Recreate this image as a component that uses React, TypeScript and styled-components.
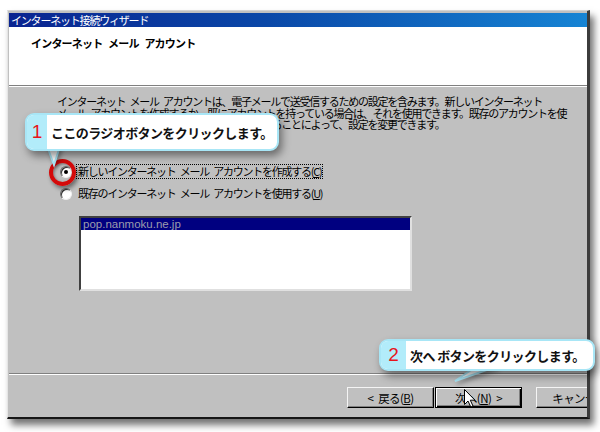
import React from 'react';
import styled, { createGlobalStyle } from 'styled-components';

const GlobalStyle = createGlobalStyle`
  html, body {
    margin: 0;
    padding: 0;
    background: #fff;
  }
  body {
    width: 600px;
    height: 432px;
    overflow: hidden;
    font-family: "Noto Sans CJK JP", "Liberation Sans", sans-serif;
  }
`;

const Stage = styled.div`
  position: relative;
  width: 600px;
  height: 432px;
  padding: 10px 0 0 7px;
  box-sizing: border-box;
`;

const Window = styled.div`
  width: 583px;
  height: 409px;
  box-sizing: border-box;
  display: flex;
  flex-direction: column;
  background: #c0c0c0;
  border-top: 1px solid #d4d4d4;
  border-left: 1px solid #e4e4e4;
  border-right: 3px solid #3c3c3c;
  border-bottom: 2px solid #161616;
  padding: 2px 0 0 1px;
  box-shadow: 4px 6px 7px rgba(0, 0, 0, 0.55);
  overflow: hidden;
`;

const TitleBar = styled.div`
  height: 14px;
  flex: none;
  display: flex;
  align-items: center;
  padding-left: 2px;
  background: linear-gradient(90deg, #0a2490 0%, #0a48a8 45%, #1684d4 100%);
  color: #fff;
  font-size: 11px;
  letter-spacing: -1.2px;
  line-height: 14px;
`;

const Header = styled.div`
  height: 59px;
  flex: none;
  box-sizing: border-box;
  background: #fff;
  border-bottom: 1px solid #808080;
  padding: 8px 0 0 22px;
`;

const HeaderTitle = styled.div`
  font-size: 11px;
  font-weight: bold;
  letter-spacing: -0.8px;
  word-spacing: 4px;
  color: #000;
`;

const Body = styled.div`
  flex: 1;
  border-top: 1px solid #fff;
  padding: 9px 0 0 48px;
  font-size: 11px;
  letter-spacing: -1.25px;
  word-spacing: 3px;
  color: #000;
`;

const Paragraph = styled.p`
  margin: 0;
  line-height: 11.5px;
  white-space: nowrap;
`;

const RadioGroup = styled.div`
  margin-top: 34px;
  margin-left: 3px;
  display: flex;
  flex-direction: column;
  gap: 8px;
`;

const RadioRow = styled.label`
  display: flex;
  align-items: center;
  gap: 5px;
  height: 14px;
`;

const RadioDot = styled.span<{ $checked?: boolean }>`
  position: relative;
  width: 12px;
  height: 12px;
  box-sizing: border-box;
  border-radius: 50%;
  background: #fff;
  border: 1px solid;
  border-color: #6a6a6a #f0f0f0 #f0f0f0 #6a6a6a;
  box-shadow: inset 1px 1px 0 #303030;
  &::after {
    content: '';
    display: ${p => (p.$checked ? 'block' : 'none')};
    position: absolute;
    left: 3px;
    top: 3px;
    width: 4px;
    height: 4px;
    border-radius: 50%;
    background: #000;
  }
`;

const RadioLabel = styled.span<{ $focused?: boolean }>`
  padding: 0 1px;
  line-height: 13px;
  white-space: nowrap;
  outline: ${p => (p.$focused ? '1px dotted #000' : 'none')};
`;

const Key = styled.span`
  text-decoration: underline;
`;

const ListBox = styled.div`
  margin: 15px 0 0 22px;
  width: 333px;
  height: 75px;
  box-sizing: border-box;
  background: #fff;
  border: 2px solid;
  border-color: #404040 #e0e0e0 #e0e0e0 #404040;
`;

const ListItem = styled.div<{ $selected?: boolean }>`
  height: 12px;
  line-height: 12px;
  padding-left: 2px;
  font-family: "Liberation Sans", Arial, sans-serif;
  font-size: 11.5px;
  letter-spacing: 0;
  word-spacing: 0;
  color: ${p => (p.$selected ? '#9c9cac' : '#000')};
  background: ${p => (p.$selected ? '#000080' : 'transparent')};
`;

const Footer = styled.div`
  height: 44px;
  flex: none;
  box-sizing: border-box;
  border-top: 1px solid #808080;
  box-shadow: inset 0 1px 0 #fff;
  padding: 13px 0 0 338px;
  display: flex;
  gap: 1px;
`;

const Button = styled.div<{ $default?: boolean }>`
  flex: none;
  width: 87px;
  height: 21px;
  box-sizing: border-box;
  display: flex;
  align-items: center;
  justify-content: center;
  white-space: pre;
  font-size: 11.5px;
  letter-spacing: -0.6px;
  word-spacing: 3px;
  color: #000;
  background: #c0c0c0;
  border: 1px solid;
  border-color: ${p => (p.$default ? '#000' : '#f4f4f4 #000 #000 #f4f4f4')};
  box-shadow: ${p =>
    p.$default
      ? 'inset 1px 1px 0 #fff, inset -1px -1px 0 #000, inset -2px -2px 0 #808080'
      : 'inset -1px -1px 0 #808080'};
`;

const CancelButton = styled(Button)`
  margin-left: 13px;
`;

const Callout = styled.div<{ $x: number; $y: number; $w: number; $h: number }>`
  position: absolute;
  left: ${p => p.$x}px;
  top: ${p => p.$y}px;
  width: ${p => p.$w}px;
  height: ${p => p.$h}px;
  box-sizing: border-box;
  display: flex;
  border: 2px solid #a8e6f6;
  border-radius: 9px;
  background: #fff;
  box-shadow: 3px 5px 8px rgba(0, 0, 0, 0.45);
`;

const CalloutNum = styled.div<{ $w: number }>`
  flex: none;
  width: ${p => p.$w}px;
  display: flex;
  align-items: center;
  justify-content: center;
  background: #b2ecfa;
  border-radius: 7px 0 0 7px;
  color: #e8151c;
  font-family: "Liberation Sans", Arial, sans-serif;
  font-size: 19px;
`;

const CalloutText = styled.div`
  flex: 1;
  display: flex;
  align-items: center;
  padding-left: 4px;
  font-size: 13px;
  font-weight: bold;
  letter-spacing: -0.6px;
  color: #111;
  white-space: nowrap;
`;

const Tail = styled.svg<{ $x: number; $y: number }>`
  position: absolute;
  left: ${p => p.$x}px;
  top: ${p => p.$y}px;
  overflow: visible;
  filter: drop-shadow(2px 3px 2px rgba(0, 0, 0, 0.3));
`;

const Ring = styled.div`
  position: absolute;
  left: 49px;
  top: 159px;
  width: 27px;
  height: 27px;
  box-sizing: border-box;
  border-radius: 50%;
  border: 4px solid #d40a0a;
  box-shadow: 2px 3px 4px rgba(0, 0, 0, 0.45), inset 1px 1px 3px rgba(0, 0, 0, 0.4);
`;

const Cursor = styled.svg`
  position: absolute;
  left: 464px;
  top: 389px;
`;

export default function App() {
  return (
    <>
      <GlobalStyle />
      <Stage>
        <Window>
          <TitleBar>インターネット接続ウィザード</TitleBar>
          <Header>
            <HeaderTitle>インターネット メール アカウント</HeaderTitle>
          </Header>
          <Body>
            <Paragraph>
              インターネット メール アカウントは、電子メールで送受信するための設定を含みます。新しいインターネット
              <br />
              メール アカウントを作成するか、既にアカウントを持っている場合は、それを使用できます。既存のアカウントを使
              <br />
              用する場合は、一覧からそのアカウントを選択することによって、設定を変更できます。
            </Paragraph>
            <RadioGroup>
              <RadioRow>
                <RadioDot $checked />
                <RadioLabel $focused>
                  新しいインターネット メール アカウントを作成する(<Key>C</Key>)
                </RadioLabel>
              </RadioRow>
              <RadioRow>
                <RadioDot />
                <RadioLabel>
                  既存のインターネット メール アカウントを使用する(<Key>U</Key>)
                </RadioLabel>
              </RadioRow>
            </RadioGroup>
            <ListBox>
              <ListItem $selected>pop.nanmoku.ne.jp</ListItem>
            </ListBox>
          </Body>
          <Footer>
            <Button>
              {'< 戻る('}<Key>B</Key>{')'}
            </Button>
            <Button $default>
              {'次へ('}<Key>N</Key>{') >'}
            </Button>
            <CancelButton>キャンセル</CancelButton>
          </Footer>
        </Window>

        <Ring />

        <Tail $x={44} $y={146} width="20" height="22">
          <path d="M3 0 L10 19 L16 0 Z" fill="#fff" stroke="#a8e6f6" strokeWidth="2" />
        </Tail>
        <Callout $x={25} $y={113} $w={254} $h={38}>
          <CalloutNum $w={20}>1</CalloutNum>
          <CalloutText>ここのラジオボタンをクリックします。</CalloutText>
        </Callout>
        <Tail $x={452} $y={366} width="50" height="20">
          <path d="M25 0 L3 15 L46 0 Z" fill="#fff" stroke="#a8e6f6" strokeWidth="2" />
        </Tail>
        <Callout $x={379} $y={339} $w={216} $h={32}>
          <CalloutNum $w={25}>2</CalloutNum>
          <CalloutText>次へ ボタンをクリックします。</CalloutText>
        </Callout>

        <Cursor width="12" height="19" viewBox="0 0 12 19">
          <path
            d="M0.5 0.5 L0.5 15.5 L4 12 L6.8 18 L9 17 L6.3 11.2 L11 11.2 Z"
            fill="#fff"
            stroke="#000"
            strokeWidth="1"
          />
        </Cursor>
      </Stage>
    </>
  );
}
